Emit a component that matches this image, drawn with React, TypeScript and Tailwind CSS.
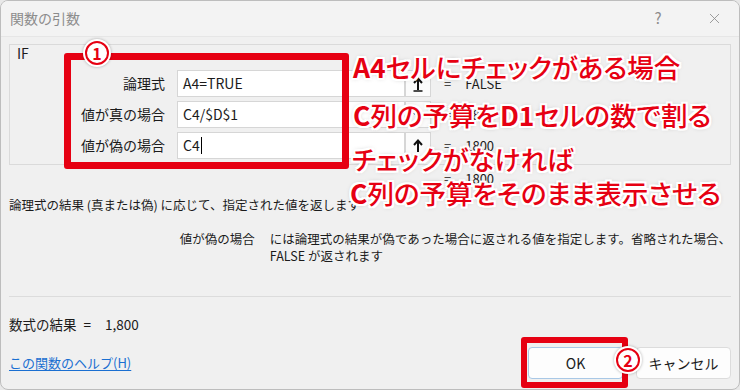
import { X } from 'lucide-react';

const outline =
  '[text-shadow:-2px_-2px_0_#fff,2px_-2px_0_#fff,-2px_2px_0_#fff,2px_2px_0_#fff,0_2px_0_#fff,0_-2px_0_#fff,2px_0_0_#fff,-2px_0_0_#fff,0_0_5px_rgba(0,0,0,0.35)]';

function RefButton({ bar }: { bar?: boolean }) {
  return (
    <div className="w-[26px] h-[27px] bg-[#fbfbfb] border border-[#d6d6d6] flex items-center justify-center">
      <svg width="12" height="16" viewBox="0 0 12 16" fill="none" stroke="#111" strokeWidth="2">
        <path d="M6 14V3" />
        <path d="M2 7l4-4.5L10 7" />
        {bar && <path d="M1.5 15h9" strokeWidth="1.5" />}
      </svg>
    </div>
  );
}

interface Arg {
  label: string;
  value: string;
  result: string;
  bar?: boolean;
  caret?: boolean;
}

const args: Arg[] = [
  { label: '論理式', value: 'A4=TRUE', result: 'FALSE', bar: true },
  { label: '値が真の場合', value: 'C4/$D$1', result: '1800' },
  { label: '値が偽の場合', value: 'C4', result: '1800', caret: true },
];

function Badge({ n, className }: { n: string; className: string }) {
  return (
    <div className={`absolute w-[28px] h-[28px] rounded-full bg-white p-[2px] shadow-[0_0_3px_rgba(0,0,0,0.3)] ${className}`}>
      <div className="w-full h-full rounded-full border-2 border-[#e60012] flex items-center justify-center text-[#e60012] text-[16px] font-bold leading-none">
        {n}
      </div>
    </div>
  );
}

export default function App() {
  return (
    <div className="w-[740px] h-[390px] bg-[#e8e8e8] relative overflow-hidden font-['Noto_Sans_CJK_JP','Noto_Sans',sans-serif] text-[#1b1b1b]">
      <div className="h-full bg-[#f0f0f0] border border-[#bdbdbd] rounded-[8px] flex flex-col overflow-hidden">
        {/* Title bar */}
        <div className="h-[36px] shrink-0 bg-[#f3f3f3] flex items-center pl-[9px] border-b border-[#e6e6e6]">
          <span className="text-[14px] text-[#8c8c8c]">関数の引数</span>
          <span className="ml-auto w-[46px] text-center text-[15px] text-[#8c8c8c]">?</span>
          <span className="ml-[10px] mr-[2px] w-[46px] flex justify-center text-[#8c8c8c]">
            <X className="w-[17px] h-[17px]" strokeWidth={1.2} />
          </span>
        </div>

        <div className="px-[8px] flex flex-col">
          {/* Group box */}
          <div className="mt-[7px] h-[121px] border border-[#dadada] flex flex-col">
            <div className="pl-[7px] pt-[1px] text-[14px] leading-[14px]">IF</div>
            <div className="mt-[10px] flex flex-col gap-[4px]">
              {args.map((a) => (
                <div key={a.label} className="flex items-center h-[27px] text-[14px]">
                  <div className="w-[155px] text-right">{a.label}</div>
                  <div className="ml-[12px] w-[228px] h-[27px] bg-white border border-[#d6d6d6] flex items-center pl-[5px]">
                    {a.value}
                    {a.caret && <span className="ml-[1px] w-px h-[17px] bg-black" />}
                  </div>
                  <RefButton bar={a.bar} />
                  <span className="ml-[13px] text-[13px]">=</span>
                  <span className="ml-[14px] text-[13px]">{a.result}</span>
                </div>
              ))}
            </div>
          </div>

          <div className="h-[28px] flex items-center pl-[435px] text-[13px]">
            <span>=</span>
            <span className="ml-[14px]">1800</span>
          </div>

          <div className="mt-[2px] h-[20px] leading-[20px] text-[12.5px] whitespace-nowrap">
            論理式の結果 (真または偽) に応じて、指定された値を返します
          </div>

          <div className="mt-[15px] flex text-[12.5px] leading-[17px] whitespace-nowrap">
            <div className="w-[249px] text-right">値が偽の場合</div>
            <div className="ml-[15px]">
              には論理式の結果が偽であった場合に返される値を指定します。省略された場合、
              <br />
              FALSE が返されます
            </div>
          </div>

          <div className="mt-[32px] h-px bg-[#dcdcdc]" />

          <div className="mt-[17px] h-[20px] flex items-center text-[13.5px]">
            <span>数式の結果</span>
            <span className="ml-[7px]">=</span>
            <span className="ml-[14px]">1,800</span>
          </div>

          <div className="mt-[13px] h-[32px] flex items-center">
            <a className="text-[13px] text-[#1a6fd1] underline underline-offset-2">この関数のヘルプ(H)</a>
            <button className="ml-auto w-[95px] h-[32px] bg-[#fdfdfd] border border-[#a9c8e6] rounded-[4px] text-[14px]">
              OK
            </button>
            <button className="ml-[13px] w-[95px] h-[32px] bg-[#fdfdfd] border border-[#dcdcdc] rounded-[4px] text-[14px]">
              キャンセル
            </button>
          </div>
        </div>
      </div>

      {/* Annotations */}
      <div className="absolute left-[64px] top-[53px] w-[285px] h-[116px] border-[7px] border-[#e60012] rounded-[3px]" />
      <Badge n="1" className="left-[83px] top-[39px]" />
      <div className="absolute left-[521px] top-[337px] w-[107px] h-[51px] border-[6px] border-[#e60012] rounded-[3px]" />
      <Badge n="2" className="left-[614px] top-[346px]" />

      <div
        className={`absolute inset-0 text-[26.5px] leading-none font-medium text-[#e60012] whitespace-nowrap [font-feature-settings:'palt'] ${outline}`}
      >
        <div className="absolute left-[353px] top-[54px]">
          <span className="font-bold">A4</span>セルにチェックがある場合
        </div>
        <div className="absolute left-[353px] top-[102px]">
          <span className="font-bold">C</span>列の予算を<span className="font-bold">D1</span>セルの数で割る
        </div>
        <div className="absolute left-[352px] top-[146px]">チェックがなければ</div>
        <div className="absolute left-[350px] top-[180px]">
          <span className="font-bold">C</span>列の予算をそのまま表示させる
        </div>
      </div>
    </div>
  );
}
